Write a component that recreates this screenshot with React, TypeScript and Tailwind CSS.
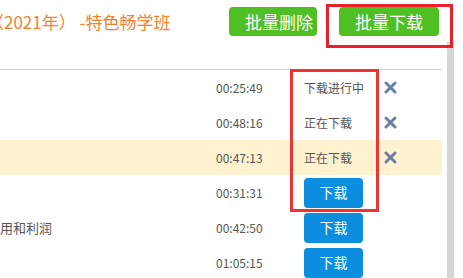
import React from 'react';

type Row = {
  title?: string;
  time: string;
  status?: string;
  highlight?: boolean;
};

const rows: Row[] = [
  { time: '00:25:49', status: '下载进行中' },
  { time: '00:48:16', status: '正在下载' },
  { time: '00:47:13', status: '正在下载', highlight: true },
  { time: '00:31:31' },
  { title: '费用和利润', time: '00:42:50' },
  { time: '01:05:15' },
];

const CloseIcon = () => (
  <svg width="13" height="13" viewBox="0 0 13 13" className="block">
    <path d="M2 2 L11 11 M11 2 L2 11" stroke="#6a7fa3" strokeWidth="3" strokeLinecap="round" />
  </svg>
);

const App: React.FC = () => {
  return (
    <div
      className="relative w-[463px] h-[278px] overflow-hidden bg-white text-[#555]"
      style={{ fontFamily: '"Noto Sans CJK SC", "Liberation Sans", sans-serif' }}
    >
      {/* header */}
      <div className="flex h-[69px] w-[442px] items-start pt-[7px]">
        <div className="ml-[-13px] flex h-[29px] items-center whitespace-nowrap text-[17px] text-[#f5822a]">
          （2021年） -特色畅学班
        </div>
        <div className="ml-auto mr-[3px] flex gap-[22px]">
          <button className="flex h-[29px] w-[88px] items-center rounded-[4px] bg-[#4fc023] pl-[16px] text-[17px] text-white">
            批量删除
          </button>
          <button className="flex h-[29px] w-[100px] items-center justify-center rounded-[4px] bg-[#4fc023] text-[17px] text-white">
            批量下载
          </button>
        </div>
      </div>

      {/* table */}
      <div className="w-[442px] border-t border-[#c3d8f0]">
        {rows.map((r, i) => (
          <div
            key={i}
            className={`flex h-[35px] items-center ${r.highlight ? 'bg-[#fef2d1]' : 'bg-white'}`}
          >
            <div className="w-[216px] overflow-hidden whitespace-nowrap text-[13px] text-[#555]">
              {r.title ? <span className="ml-[-13px] inline-block">{r.title}</span> : null}
            </div>
            <div className="w-[88px] text-[12px] text-[#555]">{r.time}</div>
            <div className="flex w-[80px] items-center text-[12px] text-[#555]">
              {r.status ? (
                r.status
              ) : (
                <button className="flex h-[30px] w-[59px] items-center justify-center rounded-[4px] bg-[#0b8de0] text-[14px] text-white">
                  下载
                </button>
              )}
            </div>
            <div className="flex w-[20px] items-center">{r.status ? <CloseIcon /> : null}</div>
          </div>
        ))}
      </div>

      {/* scrollbar */}
      <div className="absolute left-[447px] top-[42px] h-[236px] w-[7px] bg-[#d6d6d6]" />

      {/* annotation boxes */}
      <div className="pointer-events-none absolute left-[326px] top-[4px] h-[44px] w-[127px] border-[3px] border-[#e8202a]" />
      <div className="pointer-events-none absolute left-[290px] top-[69px] h-[143px] w-[89px] border-[3px] border-[#ef3333]" />
    </div>
  );
};

export default App;
